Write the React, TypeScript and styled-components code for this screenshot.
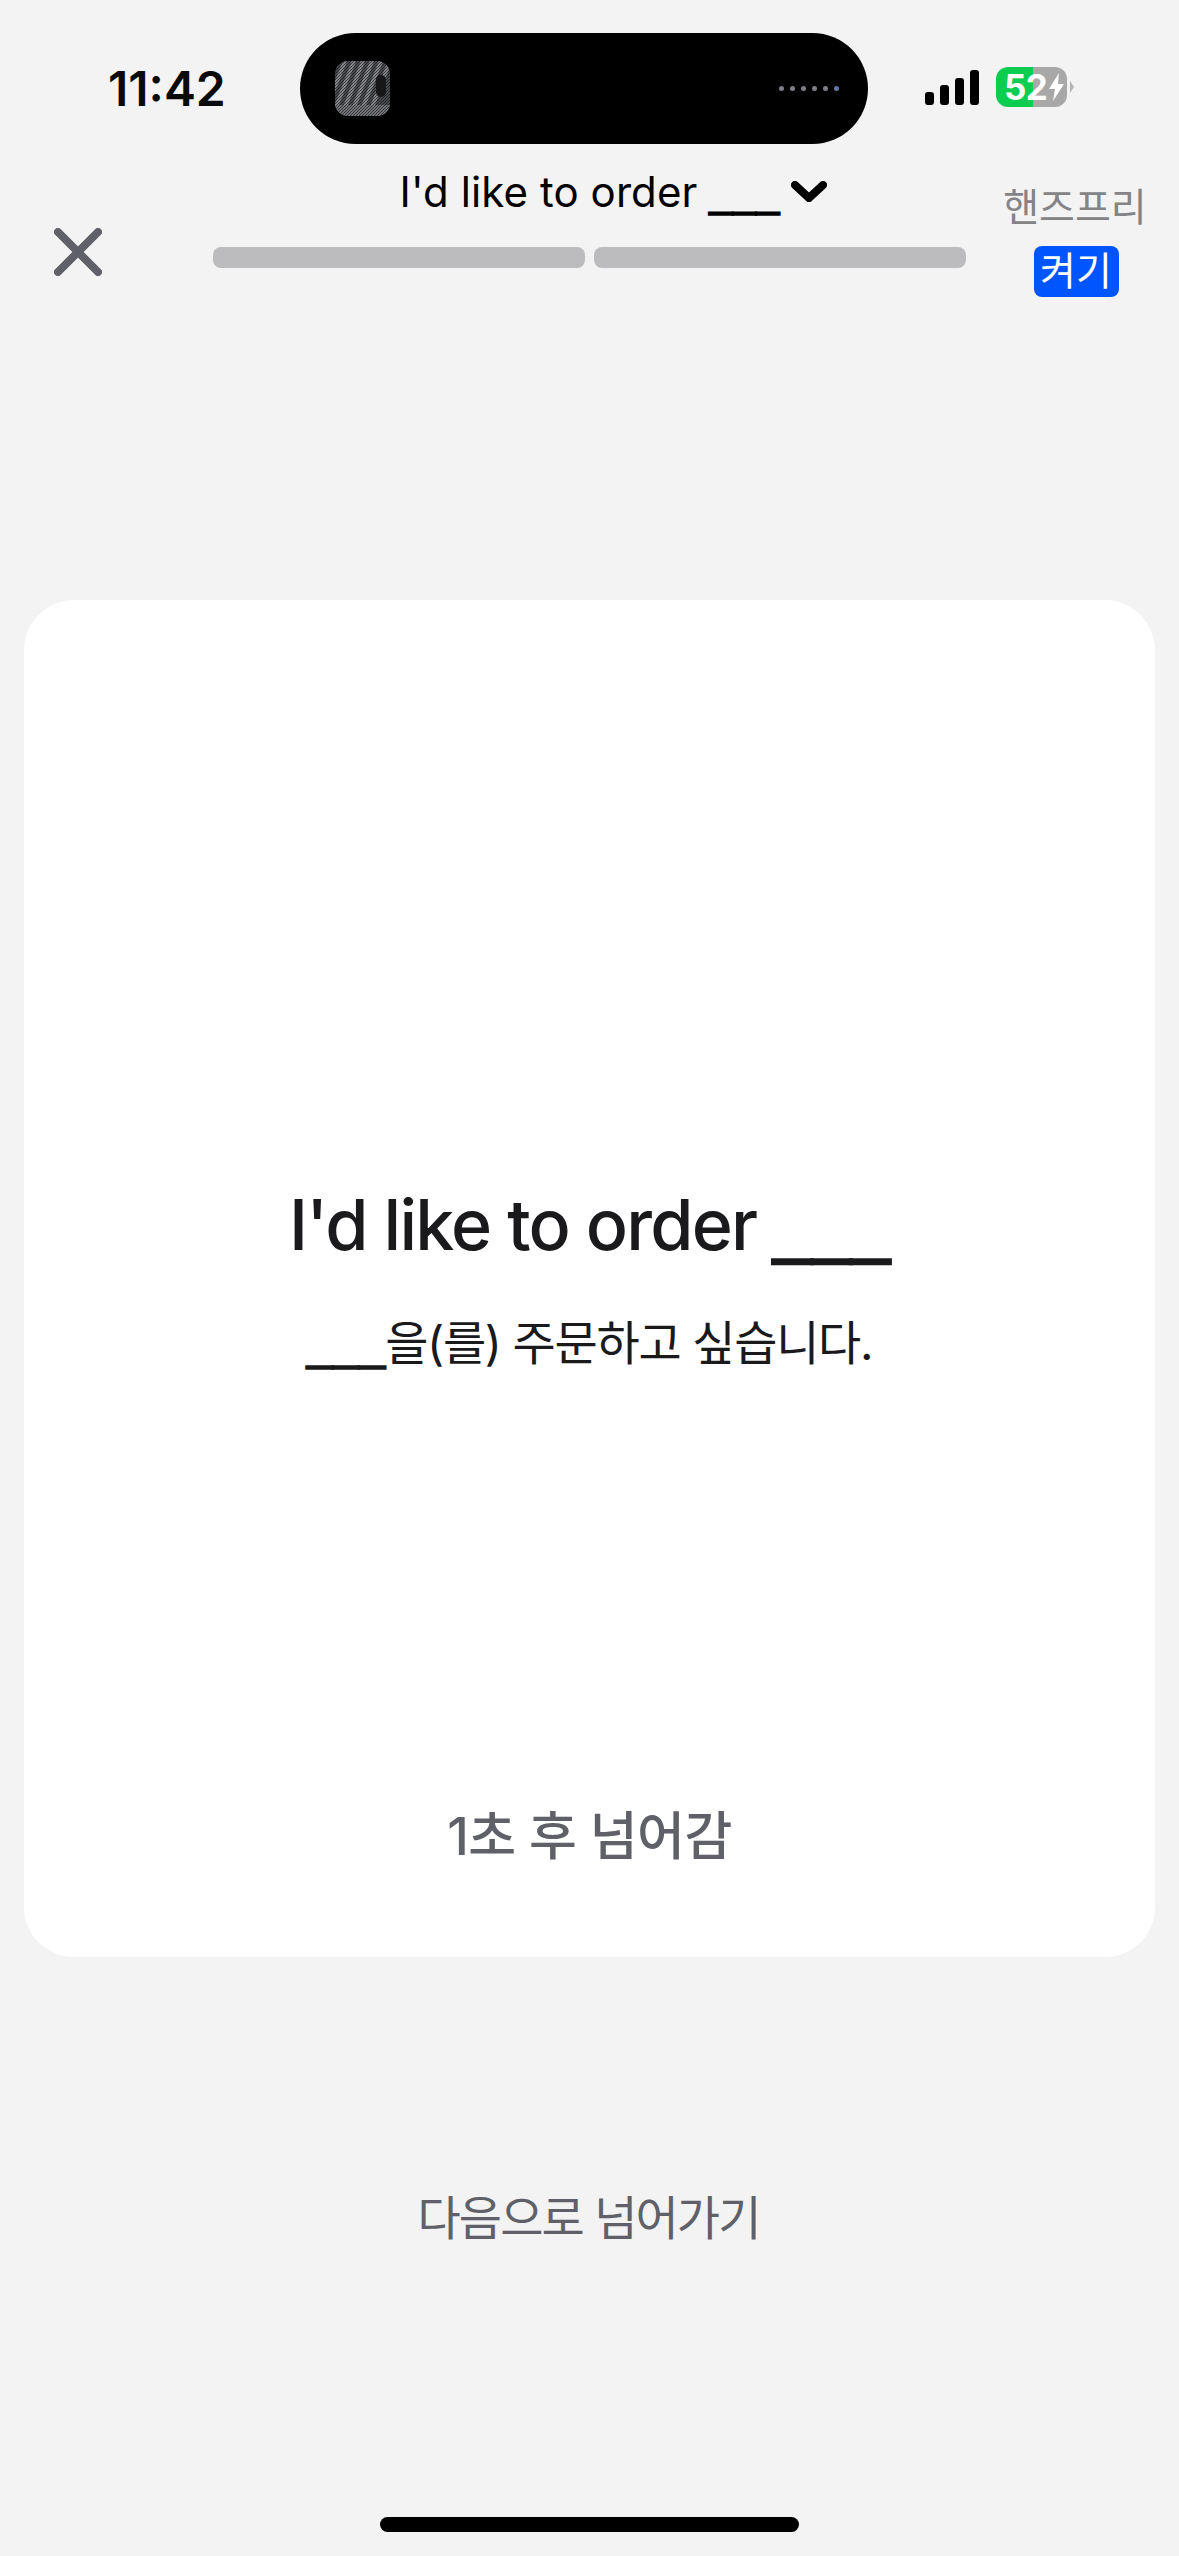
import React from 'react';
import styled, { createGlobalStyle } from 'styled-components';

const GlobalStyle = createGlobalStyle`
  html, body {
    margin: 0;
    padding: 0;
    background: #f3f3f3;
  }
  * {
    box-sizing: border-box;
  }
`;

const KOREAN_STACK = `Inter, "Noto Sans CJK KR", sans-serif`;

const Page = styled.div`
  width: 1179px;
  height: 2556px;
  background: #f3f3f3;
  display: flex;
  flex-direction: column;
  font-family: ${KOREAN_STACK};
  overflow: hidden;
`;

const StatusBar = styled.div`
  height: 144px;
  padding: 33px 0 0 108px;
  display: flex;
  align-items: center;
`;

const Time = styled.div`
  width: 117px;
  margin-right: 75px;
  font-size: 48px;
  font-weight: 600;
  line-height: 1;
  color: #0a0a0a;
  white-space: nowrap;
`;

const Island = styled.div`
  width: 568px;
  height: 111px;
  border-radius: 56px;
  background: #000;
  padding: 0 29px 0 35px;
  display: flex;
  align-items: center;
  justify-content: space-between;
`;

const Thumb = styled.svg`
  width: 55px;
  height: 55px;
  display: block;
`;

const Dots = styled.div`
  display: flex;
  gap: 6px;
`;

const Dot = styled.span<{ $tint?: boolean }>`
  width: 5px;
  height: 5px;
  border-radius: 50%;
  background: ${p => (p.$tint ? '#5f78a8' : '#7f8087')};
`;

const Signal = styled.div`
  margin-left: 57px;
  margin-top: -3px;
  height: 35px;
  display: flex;
  align-items: flex-end;
  gap: 6px;
`;

const SignalBar = styled.span<{ $h: number }>`
  width: 9px;
  height: ${p => p.$h}px;
  border-radius: 3px;
  background: #000;
`;

const Battery = styled.div`
  position: relative;
  margin-left: 17px;
  margin-top: -3px;
  width: 71px;
  height: 40px;
  padding-left: 8px;
  border-radius: 12px;
  background: linear-gradient(90deg, #0bce50 0 37px, #a8a8a8 37px 100%);
  display: flex;
  align-items: center;
  color: #fff;
  font-size: 35px;
  font-weight: 700;
  line-height: 1;
  letter-spacing: -0.5px;
`;

const Bolt = styled.svg`
  width: 17px;
  height: 28px;
  margin-left: 1px;
`;

const BatteryNub = styled.span`
  position: absolute;
  left: 74px;
  top: 14px;
  width: 4px;
  height: 12px;
  background: #b4b4b4;
  clip-path: polygon(0 0, 100% 50%, 0 100%);
`;

const Header = styled.div`
  display: flex;
  align-items: flex-start;
  padding: 0 33px 0 54px;
`;

const CloseButton = styled.svg`
  width: 48px;
  height: 48px;
  margin-top: 84px;
  flex: none;
`;

const Center = styled.div`
  width: 753px;
  margin-left: 111px;
  flex: none;
  padding-top: 26px;
`;

const TitleRow = styled.div`
  display: flex;
  justify-content: center;
`;

const Title = styled.div`
  position: relative;
  font-size: 42px;
  line-height: 44px;
  font-weight: 400;
  letter-spacing: 0.1px;
  color: #000;
  white-space: nowrap;
`;

// the blank is wider and heavier than Inter's underscore
const Blank = styled.span`
  font-family: "Liberation Sans", sans-serif;
  letter-spacing: 0;
  -webkit-text-stroke: 0.035em currentColor;
`;

const Chevron = styled.svg`
  position: absolute;
  left: calc(100% + 12px);
  top: 11px;
  width: 36px;
  height: 21px;
`;

const Progress = styled.div`
  margin-top: 32px;
  display: grid;
  grid-template-columns: 1fr 1fr;
  gap: 9px;
`;

const ProgressBar = styled.div`
  height: 21px;
  border-radius: 8px;
  background: #bcbcbe;
`;

const Handsfree = styled.div`
  margin-left: 38px;
  padding-top: 38px;
  width: 142px;
  display: flex;
  flex-direction: column;
  align-items: center;
`;

const HandsfreeLabel = styled.div`
  font-size: 39px;
  line-height: 50px;
  color: #848487;
  white-space: nowrap;
`;

const Toggle = styled.div`
  margin-top: 14px;
  margin-left: 2px;
  width: 85px;
  height: 51px;
  border-radius: 8px;
  background: #0055ff;
  color: #fff;
  font-size: 39px;
  line-height: 50px;
  text-align: center;
  white-space: nowrap;
`;

const Card = styled.div`
  margin: 303px 24px 0;
  height: 1357px;
  border-radius: 50px;
  background: #fff;
  display: flex;
  flex-direction: column;
  align-items: center;
  padding-top: 583px;
`;

const Heading = styled.div`
  font-size: 70px;
  line-height: 84px;
  font-weight: 500;
  letter-spacing: -1.8px;
  color: #1a1a1c;
  white-space: nowrap;
`;

const Translation = styled.div`
  margin-top: 45px;
  font-size: 47px;
  line-height: 60px;
  letter-spacing: -1.3px;
  color: #1a1a1c;
  white-space: nowrap;
`;

const Countdown = styled.div`
  margin-top: auto;
  margin-bottom: 90px;
  font-size: 52px;
  line-height: 60px;
  font-weight: 500;
  letter-spacing: -0.5px;
  color: #5f6068;
  white-space: nowrap;
`;

const SkipArea = styled.div`
  flex: 1;
  display: flex;
  flex-direction: column;
  align-items: center;
`;

const Skip = styled.div`
  margin-top: 231px;
  margin-right: 2px;
  font-size: 47px;
  line-height: 60px;
  letter-spacing: -1.9px;
  color: #5f6068;
  white-space: nowrap;
`;

const HomeBar = styled.div`
  margin-top: auto;
  margin-bottom: 24px;
  width: 419px;
  height: 15px;
  border-radius: 8px;
  background: #000;
`;

const stripes = [4, 13, 22, 31, 40, 49];

const App = () => (
  <>
    <GlobalStyle />
    <Page>
      <StatusBar>
        <Time>11:42</Time>
        <Island>
          <Thumb viewBox="0 0 55 55">
            <defs>
              <clipPath id="thumb-clip">
                <rect width="55" height="55" rx="13" />
              </clipPath>
              <pattern id="thumb-grain" width="3" height="3" patternUnits="userSpaceOnUse">
                <rect width="1" height="1" fill="#000" />
                <rect x="2" y="1" width="1" height="1" fill="#000" />
                <rect x="1" y="2" width="1" height="1" fill="#000" />
              </pattern>
            </defs>
            <g clipPath="url(#thumb-clip)">
              <rect width="55" height="55" fill="#4a4b4f" />
              {stripes.map(x => (
                <path key={x} d={`M${x + 6} 0 L${x - 12} 46`} stroke="#85868a" strokeWidth="4" />
              ))}
              <rect y="44" width="55" height="11" fill="#727377" />
              <rect width="55" height="55" fill="url(#thumb-grain)" opacity="0.55" />
              <rect x="41" y="14" width="10" height="22" rx="5" fill="#17171a" />
            </g>
          </Thumb>
          <Dots>
            {[0, 1, 2, 3, 4].map(i => (
              <Dot key={i} />
            ))}
            <Dot $tint />
          </Dots>
        </Island>
        <Signal>
          <SignalBar $h={13} />
          <SignalBar $h={20} />
          <SignalBar $h={27} />
          <SignalBar $h={35} />
        </Signal>
        <Battery>
          52
          <Bolt viewBox="0 0 17 28">
            <path d="M11 0 L1 16 H7 L5 28 L16 11 H10 Z" fill="#fff" />
          </Bolt>
          <BatteryNub />
        </Battery>
      </StatusBar>

      <Header>
        <CloseButton viewBox="0 0 48 48">
          <path d="M4 4 L44 44 M44 4 L4 44" stroke="#5f6068" strokeWidth="8" strokeLinecap="round" />
        </CloseButton>
        <Center>
          <TitleRow>
            <Title>
              I'd like to order <Blank>___</Blank>
              <Chevron viewBox="0 0 36 21">
                <path d="M4 4 L18 17 L32 4" fill="none" stroke="#000" strokeWidth="8" strokeLinecap="round" strokeLinejoin="round" />
              </Chevron>
            </Title>
          </TitleRow>
          <Progress>
            <ProgressBar />
            <ProgressBar />
          </Progress>
        </Center>
        <Handsfree>
          <HandsfreeLabel>핸즈프리</HandsfreeLabel>
          <Toggle>켜기</Toggle>
        </Handsfree>
      </Header>

      <Card>
        <Heading>
          I'd like to order <Blank>___</Blank>
        </Heading>
        <Translation>
          <Blank>___</Blank>을(를) 주문하고 싶습니다.
        </Translation>
        <Countdown>1초 후 넘어감</Countdown>
      </Card>

      <SkipArea>
        <Skip>다음으로 넘어가기</Skip>
        <HomeBar />
      </SkipArea>
    </Page>
  </>
);

export default App;
